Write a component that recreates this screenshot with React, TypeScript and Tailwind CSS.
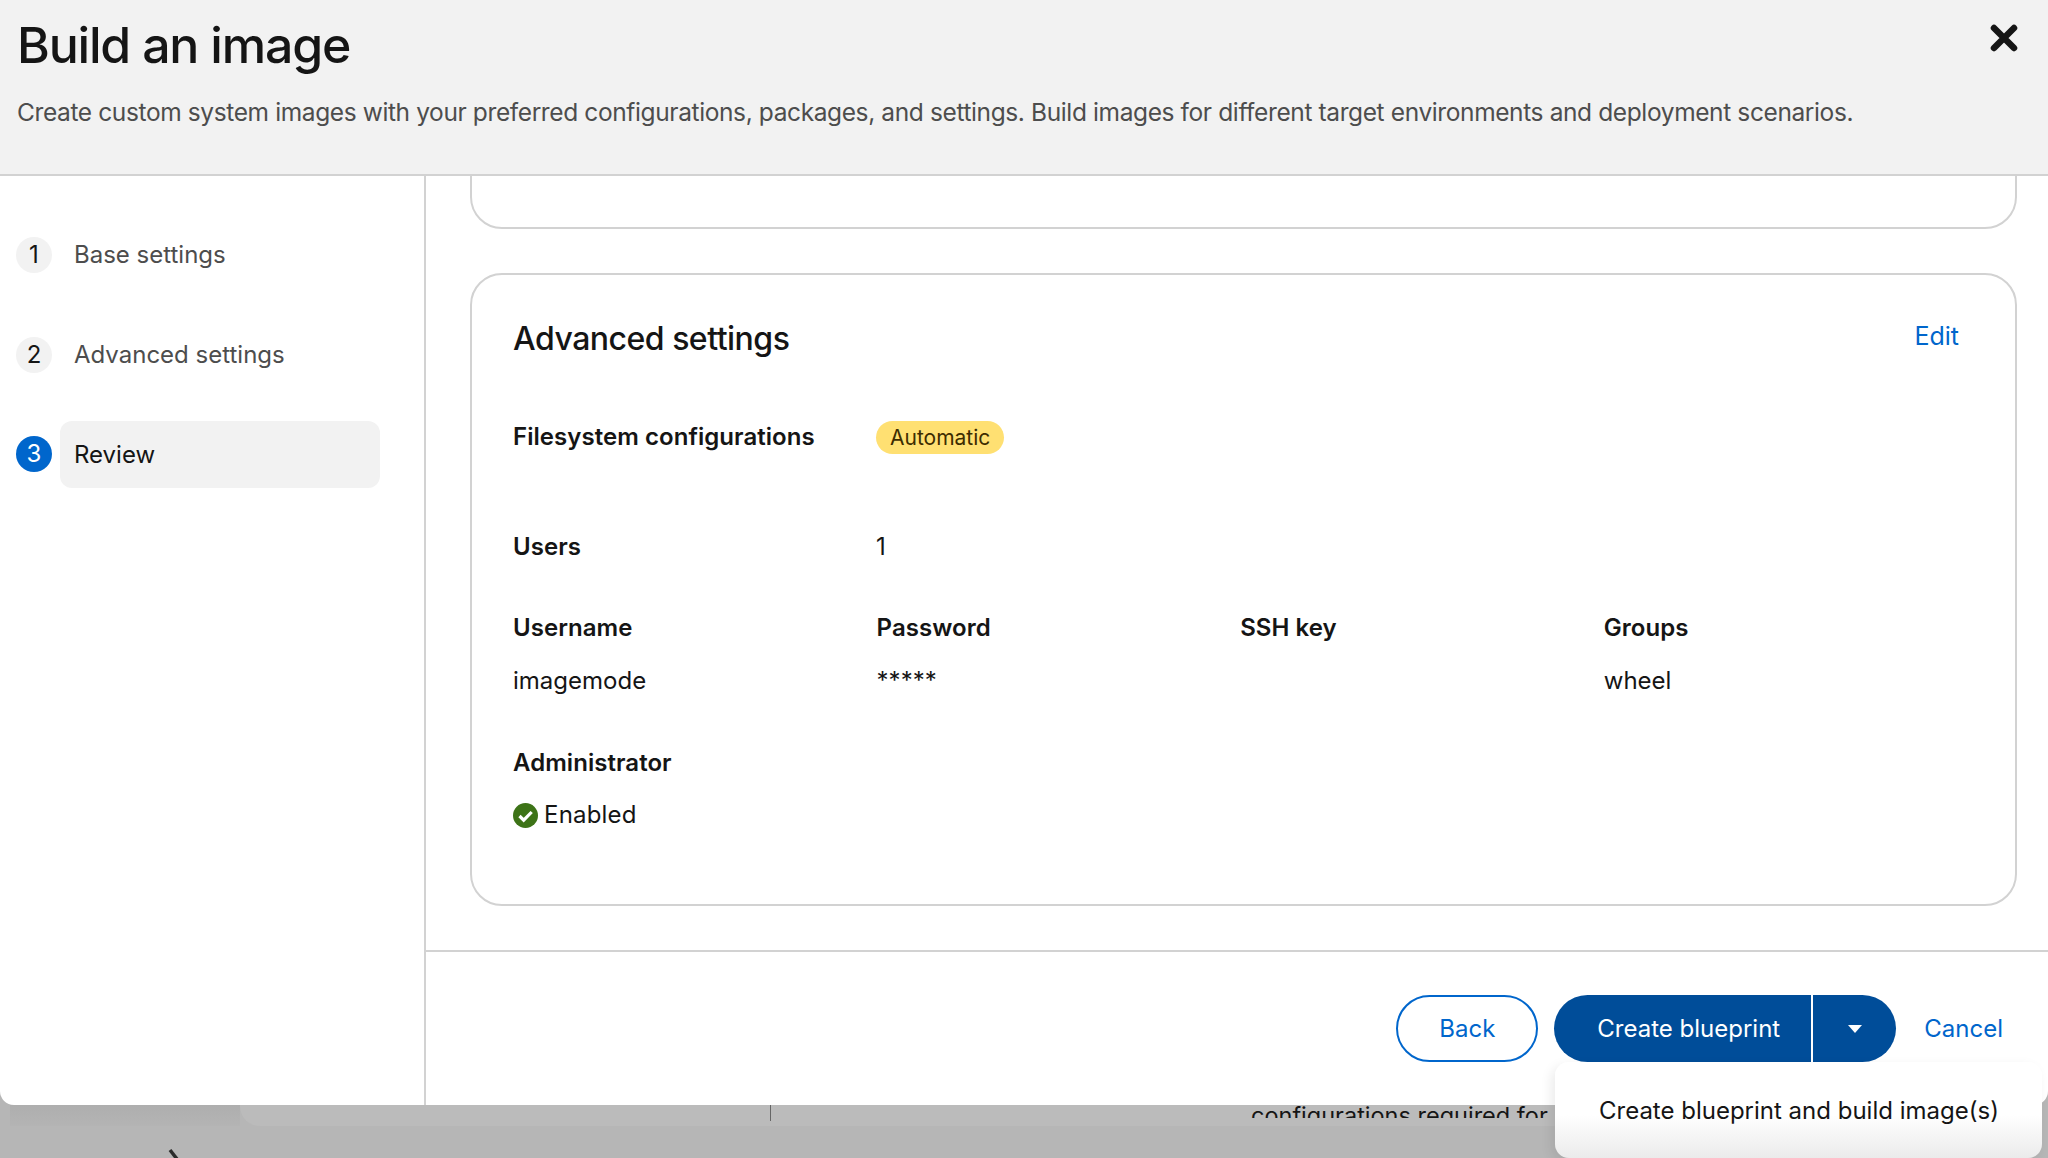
import { useState } from "react";

const steps = [
  { n: 1, label: "Base settings" },
  { n: 2, label: "Advanced settings" },
  { n: 3, label: "Review", active: true },
];

const users = [
  { heading: "Username", value: "imagemode" },
  { heading: "Password", value: "*****" },
  { heading: "SSH key", value: "" },
  { heading: "Groups", value: "wheel" },
];

const Backdrop = () => (
  <>
    <div className="absolute left-[10px] top-[1105px] h-[21px] w-[230px] bg-gradient-to-b from-[#aeaeae] to-[#b4b4b4]" />
    <div className="absolute left-[240px] top-[1105px] h-[21px] w-[1340px] rounded-bl-[20px] bg-[#bbbbbb]" />
    <div className="absolute left-[770px] top-[1105px] h-[16px] w-px bg-[#666666]" />
    {/* page text behind the modal, cut by the strip */}
    <div className="absolute left-[1251px] top-[1105px] h-[13px] w-[300px] overflow-hidden">
      <div className="mt-[-5px] whitespace-nowrap text-[23.5px] leading-[32px] text-[#151515]">configurations required for</div>
    </div>
    <svg className="absolute left-[166px] top-[1148px]" width="16" height="12" viewBox="0 0 16 12" fill="none">
      <path d="M4 2l7 9" stroke="#2b2b2b" strokeWidth="3.5" />
    </svg>
  </>
);

const Sidebar = () => (
  <nav className="flex w-[426px] shrink-0 flex-col gap-[33px] border-r-2 border-[#d2d2d2] pl-[16px] pt-[45px]">
    {steps.map((s) => (
      <div key={s.n} className="flex items-center gap-[8px]">
        <span
          className={
            s.active
              ? "mt-[-2px] flex h-[36px] w-[36px] items-center justify-center rounded-full bg-[#0066cc] text-[24px] text-white"
              : "flex h-[36px] w-[36px] items-center justify-center rounded-full bg-[#f2f2f2] text-[24px] text-[#151515]"
          }
        >
          {s.n}
        </span>
        <span
          className={
            s.active
              ? "flex h-[67px] w-[320px] items-center rounded-[12px] bg-[#f2f2f2] px-[14px] text-[24px] text-[#151515]"
              : "flex h-[67px] w-[320px] items-center px-[14px] text-[24px] text-[#4d4d4d]"
          }
        >
          {s.label}
        </span>
      </div>
    ))}
  </nav>
);

const AdvancedCard = () => (
  <section className="h-[633px] rounded-[32px] border-2 border-[#d2d2d2] pl-[41px] pr-[42px] pt-[40px]">
    <div className="flex items-start justify-between pr-[14px]">
      <h2 className="text-[32px] font-medium leading-[48px] tracking-[-0.5px] text-[#151515]">Advanced settings</h2>
      <a className="mt-[1px] text-[25px] leading-[40px] text-[#0066cc]">Edit</a>
    </div>
    <div className="mt-[56px] flex items-center text-[24px] leading-[36px]">
      <span className="w-[363px] font-semibold tracking-[0.05px] text-[#151515]">Filesystem configurations</span>
      <span className="rounded-full bg-[#ffe072] px-[14px] text-[21px] leading-[33px] text-[#3d2c00]">Automatic</span>
    </div>
    <div className="mt-[74px] flex text-[24px] leading-[36px] text-[#151515]">
      <span className="w-[363px] font-semibold tracking-[0.05px]">Users</span>
      <span>1</span>
    </div>
    <div className="mt-[45px] grid grid-cols-[repeat(4,363.6px)] gap-y-[17px] text-[24px] leading-[36px] text-[#151515]">
      {users.map((u) => (
        <span key={u.heading} className="font-semibold tracking-[0.05px]">{u.heading}</span>
      ))}
      {users.map((u) => (
        <span key={u.heading} className="h-[36px]">{u.value}</span>
      ))}
    </div>
    <div className="mt-[46px] text-[24px] leading-[36px] text-[#151515]">
      <div className="font-semibold tracking-[0.05px]">Administrator</div>
      <div className="mt-[16px] flex items-center gap-[6px]">
        <svg width="25" height="25" viewBox="0 0 25 25">
          <circle cx="12.5" cy="12.5" r="12.5" fill="#3d7317" />
          <path d="M6.5 13l4.2 4.2 8-8.2" fill="none" stroke="#fff" strokeWidth="3.2" />
        </svg>
        <span className="tracking-[0.2px]">Enabled</span>
      </div>
    </div>
  </section>
);

const Footer = () => (
  <footer className="flex h-[155px] shrink-0 items-start justify-end border-t-2 border-[#d2d2d2] pr-[45px] pt-[43px] text-[24px]">
    <button className="h-[67px] w-[142px] rounded-full border-2 border-[#0066cc] text-[#0066cc]">Back</button>
    <div className="ml-[16px] flex h-[67px] w-[342px] overflow-hidden rounded-full bg-[#004d99] text-white">
      <button className="w-[259px] border-r-2 border-white pl-[43px] text-left">Create blueprint</button>
      <button className="flex flex-1 items-center justify-center">
        <svg width="16" height="10" viewBox="0 0 16 10">
          <path d="M1 1h14L8 9z" fill="#fff" />
        </svg>
      </button>
    </div>
    <button className="ml-[28px] leading-[67px] text-[#0066cc]">Cancel</button>
  </footer>
);

export default function App() {
  const [open] = useState(true);
  return (
    <div className="relative h-[1158px] w-[2048px] overflow-hidden bg-[#b6b6b6] font-['Inter',sans-serif]">
      <Backdrop />
      {/* Modal */}
      <div className="relative flex h-[1105px] flex-col overflow-hidden rounded-b-[14px] bg-white">
        <header className="relative h-[176px] shrink-0 border-b-2 border-[#d2d2d2] bg-[#f2f2f2] pl-[17px] pt-[16px]">
          <h1 className="text-[50px] font-medium leading-[58px] tracking-[-1.2px] text-[#151515]">Build an image</h1>
          <p className="mt-[20px] whitespace-nowrap text-[24.5px] leading-[36px] tracking-[-0.385px] text-[#4d4d4d]">
            Create custom system images with your preferred configurations, packages, and settings. Build images for different target environments and deployment scenarios.
          </p>
          <button className="absolute left-[1990px] top-[24px]">
            <svg width="28" height="28" viewBox="0 0 28 28">
              <path d="M4 4l20 20M24 4L4 24" stroke="#151515" strokeWidth="6.5" strokeLinecap="round" />
            </svg>
          </button>
        </header>
        <div className="flex min-h-0 flex-1">
          <Sidebar />
          <main className="flex min-w-0 flex-1 flex-col">
            <div className="min-h-0 flex-1 overflow-hidden pl-[44px] pr-[31px]">
              <div className="mt-[-40px] h-[93px] rounded-[32px] border-2 border-[#d2d2d2]" />
              <div className="mt-[44px]">
                <AdvancedCard />
              </div>
            </div>
            <Footer />
          </main>
        </div>
      </div>
      {/* Dropdown menu */}
      {open && (
        <div className="absolute left-[1555px] top-[1062px] flex h-[96px] w-[487px] items-start rounded-[14px] bg-gradient-to-b from-white from-55% to-[#ebebeb] pl-[44px] pt-[29px] text-[24px] leading-[40px] text-[#151515] shadow-[-4px_4px_12px_rgba(0,0,0,0.08)]">
          Create blueprint and build image(s)
        </div>
      )}
    </div>
  );
}
